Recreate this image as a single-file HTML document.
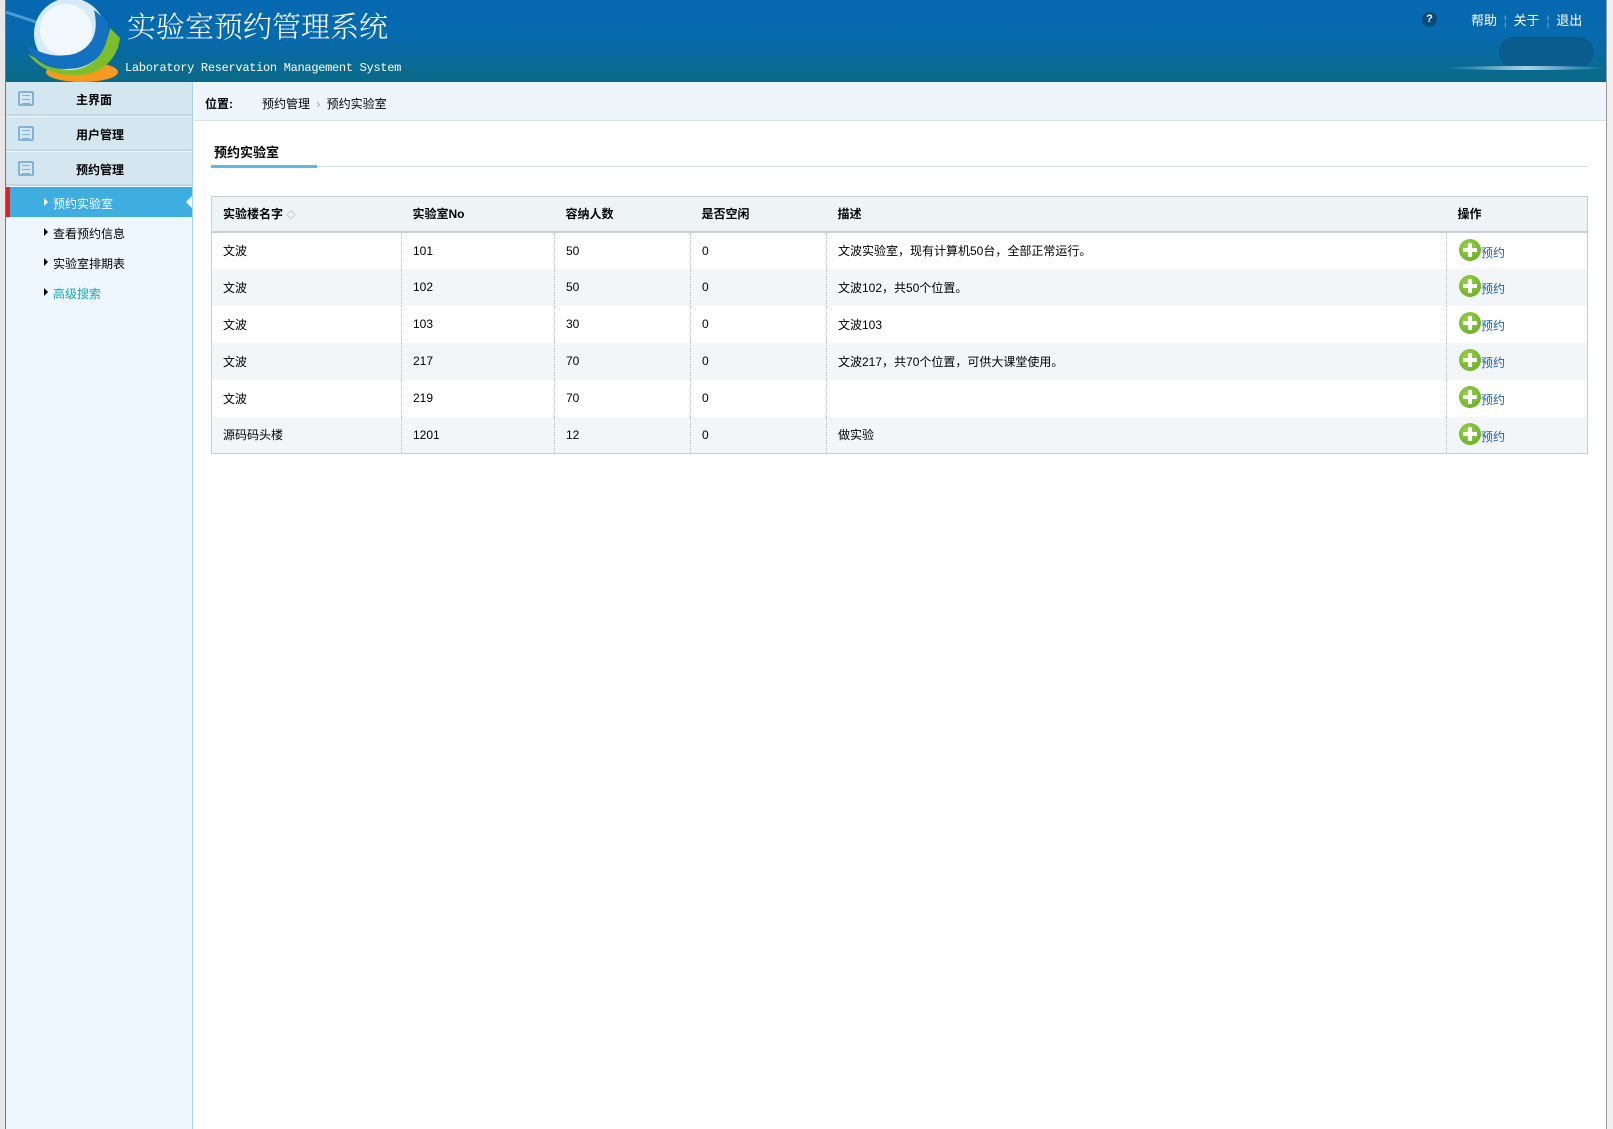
<!DOCTYPE html>
<html><head><meta charset="utf-8"><style>
*{margin:0;padding:0;box-sizing:border-box}
body{width:1613px;height:1129px;position:relative;overflow:hidden;background:#fff;font-family:"Liberation Sans","Noto Sans CJK SC",sans-serif;font-size:12px;color:#000}
.abs{position:absolute}
#leftedge{left:0;top:0;width:6px;height:1129px;background:#e8e8e8;border-right:1px solid #777}
#hdr{left:6px;top:0;width:1600px;height:82px;background:linear-gradient(#0668b0 0%,#066aae 45%,#0a6a86 100%);overflow:hidden}
#right{left:1606px;top:0;width:7px;height:1129px;background:#f0f0f0;border-left:1px solid #999}
#side{left:6px;top:82px;width:187px;height:1047px;background:#eef7fd;border-right:1px solid #a8d4e4}
.mi{position:absolute;left:0;width:186px;height:34px;background:#d4e6f0;border-bottom:2px solid #c3d7e2;font-weight:bold;font-size:12px}
.mi span{position:absolute;left:70px;top:9px}
.mi i{position:absolute;left:12px;top:9px;width:16px;height:15px;border:2px solid #7fb4d4;border-radius:2px}
.mi i:after{content:"";position:absolute;left:2px;top:2px;width:8px;height:7px;border-top:1px solid #7fb4d4;border-bottom:1px solid #7fb4d4;background:linear-gradient(#7fb4d4,#7fb4d4) 0 3px/8px 1px no-repeat}
.si{position:absolute;left:0;width:186px;height:30px;font-size:12px}
.si span{position:absolute;left:47px;top:8px}
.si b{position:absolute;left:38px;top:11px;border-left:4px solid #000;border-top:4px solid transparent;border-bottom:4px solid transparent}
td,th{font-size:12px}
</style></head><body>
<div class="abs" id="leftedge"></div>
<div class="abs" id="hdr">
 <svg class="abs" style="left:0;top:0" width="120" height="82" viewBox="0 0 120 82">
  <path d="M0 12 L60 32 L112 48" stroke="#8fd0f0" stroke-width="3" opacity=".5" fill="none"/>
  <ellipse cx="76" cy="72" rx="36" ry="10" fill="#f39a1f"/>
  <path d="M22 54 Q42 80 82 74 Q110 66 114 38 L104 28 Q98 60 68 64 Q38 64 22 54Z" fill="#7cbf2a"/>
  <circle cx="64" cy="34" r="36" fill="#d6ebf7"/>
  <circle cx="60" cy="30" r="26" fill="#f0f8fd"/>
  <path d="M20 44 Q32 74 72 68 Q104 60 102 22 L88 10 Q96 44 68 54 Q42 60 20 44Z" fill="#1470c0"/>
 </svg>
 <div class="abs" style="left:121px;top:5px;color:#fff;font-size:29px;font-family:'Noto Serif CJK SC','Noto Sans CJK SC',serif;font-weight:300">实验室预约管理系统</div>
 <div class="abs" style="left:119px;top:61px;color:#fff;font-family:'Liberation Mono',monospace;font-size:12px;letter-spacing:-0.3px">Laboratory Reservation Management System</div>
 <div class="abs" style="left:1416px;top:12px;width:15px;height:15px;border-radius:50%;background:#0a4a7a;color:#fff;font-weight:bold;font-size:11px;text-align:center;line-height:15px">?</div>
 <div class="abs" style="left:1465px;top:10px;color:#fff;font-size:13px">帮助 <span style="color:#7aa;margin:0 3px">¦</span> 关于 <span style="color:#7aa;margin:0 3px">¦</span> 退出</div>
 <div class="abs" style="left:1493px;top:37px;width:95px;height:30px;border-radius:15px;background:#0a5c8e"></div>
 <div class="abs" style="left:1440px;top:66px;width:160px;height:4px;border-radius:50%;background:linear-gradient(90deg,transparent,#cfefff,transparent);opacity:.8"></div>
</div>
<div class="abs" id="right"></div>
<div class="abs" id="side">
 <div class="mi" style="top:0"><i></i><span>主界面</span></div>
 <div class="mi" style="top:35px"><i></i><span>用户管理</span></div>
 <div class="mi" style="top:70px"><i></i><span>预约管理</span></div>
 <div class="si" style="top:105px;background:#3eade0;border-left:4px solid #e0202a;color:#fff"><b style="left:34px;border-left-color:#fff"></b><span style="left:43px">预约实验室</span></div>
 <div class="abs" style="left:180px;top:114px;border-right:6px solid #fff;border-top:6px solid transparent;border-bottom:6px solid transparent"></div>
 <div class="si" style="top:135px"><b></b><span>查看预约信息</span></div>
 <div class="si" style="top:165px"><b></b><span>实验室排期表</span></div>
 <div class="si" style="top:195px"><b></b><span style="color:#1aa8b8">高级搜索</span></div>
</div>
<div class="abs" style="left:194px;top:82px;width:1412px;height:39px;background:#eef5fb;border-bottom:1px solid #dbe3ea"></div>
<div class="abs" style="left:205px;top:95px;font-weight:bold">位置:</div>
<div class="abs" style="left:262px;top:95px">预约管理 <span style="color:#999;margin:0 3px">›</span> 预约实验室</div>
<div class="abs" style="left:214px;top:142px;font-size:13px;font-weight:bold">预约实验室</div>
<div class="abs" style="left:211px;top:166px;width:1377px;height:1px;background:#d0dbe3"></div>
<div class="abs" style="left:211px;top:165px;width:106px;height:3px;background:#5bbbe8"></div>
<table class="abs" style="left:211px;top:196px;width:1377px;border-collapse:collapse;border:1px solid #c9ced2">
<colgroup><col style="width:190px"><col style="width:153px"><col style="width:136px"><col style="width:136px"><col style="width:620px"><col></colgroup>
<tr style="height:35px;background:#eef3f6;border-bottom:2px solid #c9d1d6"><th style="text-align:left;padding-left:11px">实验楼名字 <span style="color:#999;font-size:9px">◇</span></th><th style="text-align:left;padding-left:11px">实验室No</th><th style="text-align:left;padding-left:11px">容纳人数</th><th style="text-align:left;padding-left:11px">是否空闲</th><th style="text-align:left;padding-left:11px">描述</th><th style="text-align:left;padding-left:11px">操作</th></tr>
<tbody id="tb"></tbody>
</table>
<script>
var d=[["文波","101","50","0","文波实验室，现有计算机50台，全部正常运行。"],["文波","102","50","0","文波102，共50个位置。"],["文波","103","30","0","文波103"],["文波","217","70","0","文波217，共70个位置，可供大课堂使用。"],["文波","219","70","0",""],["源码码头楼","1201","12","0","做实验"]];
var h="";d.forEach(function(r,i){h+='<tr style="height:37px;background:'+(i%2?'#f2f6f9':'#fff')+'">';r.forEach(function(c){h+='<td style="padding-left:11px;border-right:1px dotted #c0c0c0">'+c+'</td>'});
h+='<td style="padding-left:12px;position:relative"><span style="display:inline-block;width:22px;height:22px;border-radius:50%;background:radial-gradient(circle at 40% 35%,#9ad14a,#5ea81c);position:relative;vertical-align:-2px"><span style="position:absolute;left:4px;top:9px;width:14px;height:4px;background:#fff"></span><span style="position:absolute;left:9px;top:4px;width:4px;height:14px;background:#fff"></span></span><span style="color:#1a5fa8;position:relative;top:-2px">预约</span></td></tr>'});
document.getElementById("tb").innerHTML=h;
</script>
</body></html>
